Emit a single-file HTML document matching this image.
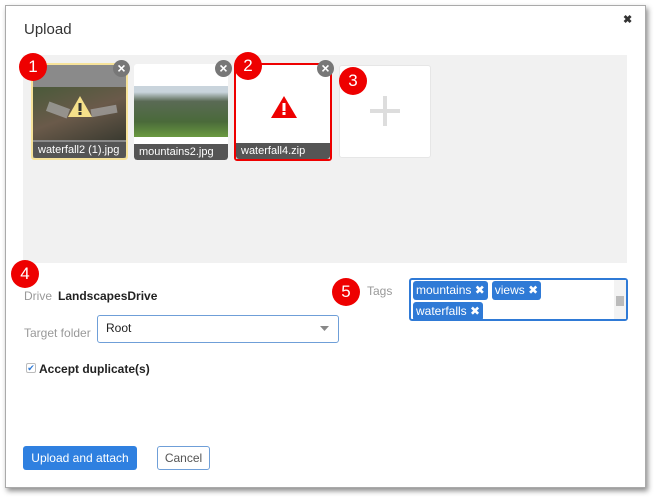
<!DOCTYPE html>
<html><head><style>
*{box-sizing:border-box}
body{margin:0;width:654px;height:498px;background:#fff;font-family:"Liberation Sans",sans-serif;position:relative;overflow:hidden}
.dlg{position:absolute;left:5px;top:5px;width:641px;height:483px;border:1px solid #aaa;box-shadow:2px 3px 5px rgba(0,0,0,.45);background:#fff}
.a{position:absolute}
.badge{position:absolute;width:28px;height:28px;border-radius:50%;background:#e00;color:#fff;font-size:17px;text-align:center;line-height:28px}
.x{position:absolute;width:17px;height:17px;border-radius:50%;background:#777;color:#fff;font-size:14px;font-weight:bold;text-align:center;line-height:16px}
.lbl{position:absolute;left:0;right:0;bottom:0;height:16px;background:#555;color:#fff;font-size:11px;line-height:16px;padding-left:5px;border-radius:0 0 3px 3px}
.tag{display:inline-block;background:#2f7ad6;color:#fff;font-size:12px;padding:0 3px;height:19px;line-height:18px;border-radius:3px;margin:1px 0 2px 2px}
</style></head><body>
<div class="dlg"></div>
<div class="a" style="left:24px;top:21px;font-size:15px;color:#333">Upload</div>
<div class="a" style="left:623px;top:13px;font-size:11px;font-weight:bold;color:#333">✖</div>
<div class="a" style="left:23px;top:55px;width:604px;height:208px;background:#f1f1f1"></div>

<div class="a" style="left:31px;top:63px;width:97px;height:97px;border:2px solid #f7e39a;border-radius:3px;background:#8a8a8a;overflow:hidden">
 <div class="a" style="left:0;top:22px;width:93px;height:53px;background:linear-gradient(160deg,#4a5a3a,#6a5a4a 50%,#3a3a30)"></div>
 <div class="a" style="left:14px;top:40px;width:22px;height:10px;background:#aaa;opacity:.7;transform:rotate(20deg)"></div>
 <div class="a" style="left:58px;top:42px;width:26px;height:8px;background:#aaa;opacity:.7;transform:rotate(-10deg)"></div>
 <svg class="a" style="left:34px;top:30px" width="26" height="23"><path d="M13 1L25 22H1Z" fill="#f5e08a"/><rect x="11.5" y="8" width="3" height="8" fill="#333"/><rect x="11.5" y="17" width="3" height="3" fill="#333"/></svg>
 <div class="lbl">waterfall2 (1).jpg</div>
</div>
<div class="x" style="left:113px;top:60px">×</div>

<div class="a" style="left:134px;top:64px;width:94px;height:96px;background:#fff;border-radius:3px;overflow:hidden">
 <div class="a" style="left:0;top:22px;width:94px;height:51px;background:linear-gradient(to bottom,#c9d4dc 0,#c9d4dc 12%,#5a6a55 30%,#4a6a3a 70%,#6a9a40)"></div>
 <div class="lbl">mountains2.jpg</div>
</div>
<div class="x" style="left:215px;top:60px">×</div>

<div class="a" style="left:234px;top:63px;width:98px;height:98px;border:2px solid #e00;border-radius:3px;background:#fff;overflow:hidden">
 <svg class="a" style="left:34px;top:30px" width="28" height="24"><path d="M14 1L27 23H1Z" fill="#e00"/><rect x="12.5" y="8" width="3" height="8" fill="#fff"/><rect x="12.5" y="17" width="3" height="3" fill="#fff"/></svg>
 <div class="lbl">waterfall4.zip</div>
</div>
<div class="x" style="left:317px;top:60px">×</div>

<div class="a" style="left:339px;top:65px;width:92px;height:93px;background:#fff;border-radius:3px;border:1px solid #e6e6e6"></div>
<div class="a" style="left:370px;top:109px;width:30px;height:4px;background:#ddd"></div>
<div class="a" style="left:383px;top:96px;width:4px;height:30px;background:#ddd"></div>

<div class="badge" style="left:19px;top:53px">1</div>
<div class="badge" style="left:234px;top:52px">2</div>
<div class="badge" style="left:339px;top:67px">3</div>
<div class="badge" style="left:11px;top:260px">4</div>
<div class="badge" style="left:332px;top:278px">5</div>

<div class="a" style="left:24px;top:289px;font-size:12px;color:#999">Drive</div>
<div class="a" style="left:58px;top:289px;font-size:12px;color:#222;font-weight:bold">LandscapesDrive</div>
<div class="a" style="left:24px;top:326px;font-size:12px;color:#999">Target folder</div>
<div class="a" style="left:97px;top:315px;width:242px;height:28px;border:1px solid #6f9fd8;border-radius:3px;font-size:12px;color:#222;padding:5px 8px">Root</div>
<svg class="a" style="left:320px;top:326px" width="9" height="5"><path d="M0 0H9L4.5 5Z" fill="#888"/></svg>
<div class="a" style="left:26px;top:363px;width:10px;height:10px;border:1px solid #bbb;border-radius:2px;font-size:9px;color:#2f7ad6;line-height:9px;text-align:center">✔</div>
<div class="a" style="left:39px;top:362px;font-size:12px;color:#222;font-weight:bold">Accept duplicate(s)</div>

<div class="a" style="left:367px;top:284px;font-size:12px;color:#999">Tags</div>
<div class="a" style="left:409px;top:278px;width:219px;height:43px;border:2px solid #2f7ad6;border-radius:3px">
 <span class="tag">mountains ✖</span><span class="tag" style="margin-left:4px">views ✖</span><br><span class="tag" style="margin-top:0">waterfalls ✖</span>
 <div class="a" style="right:0;top:0;width:12px;height:39px;background:#f3f3f3"></div>
 <div class="a" style="right:2px;top:16px;width:8px;height:10px;background:#bbb"></div>
</div>

<div class="a" style="left:23px;top:446px;width:114px;height:24px;background:#2f80e0;border-radius:3px;color:#fff;font-size:12px;text-align:center;line-height:24px">Upload and attach</div>
<div class="a" style="left:157px;top:446px;width:53px;height:24px;border:1px solid #6f9fd8;border-radius:3px;color:#555;font-size:12px;text-align:center;line-height:22px">Cancel</div>
</body></html>
